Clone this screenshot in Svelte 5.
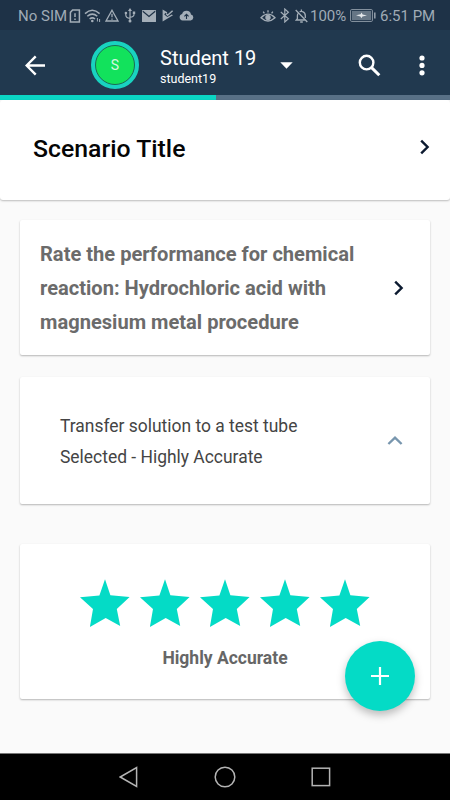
<script lang="ts">
	let progress = $state(48);
	let rating = $state(5);
	let expanded = $state(true);

	const labels = ['', 'Inaccurate', 'Slightly Accurate', 'Fair', 'Accurate', 'Highly Accurate'];
	const stars = [1, 2, 3, 4, 5];
</script>

<div class="screen">
	<div class="status">
		<span class="sim">No SIM</span>
		<svg class="stroke" width="12" height="14" viewBox="0 0 12 14">
			<path d="M3.6 1H10.4V13H1.4V3.4Z M6 4.2V8 M6 9.5V11" stroke-width="1.5" />
		</svg>
		<svg class="stroke wifi" width="18" height="14" viewBox="0 0 18 14">
			<path d="M1 4.6Q8.3-2 15.6 4.6 M3.3 7.3Q8.3 3 13.3 7.3 M5.6 10Q8.3 7.7 11 10" stroke-width="1.5" />
			<circle cx="8.3" cy="12" r="1.3" class="solid" />
			<path d="M13.4 9V12.5 M15.6 10V13" stroke-width="1" />
		</svg>
		<svg class="stroke warn" width="14" height="13" viewBox="0 0 14 13">
			<path d="M7 1.2L13 12H1Z M7 4.8V8.3 M7 9.4V10.7" stroke-width="1.3" />
		</svg>
		<svg class="stroke usb" width="12" height="15" viewBox="0 0 12 15">
			<path d="M6 2V13 M6 10.3Q1.8 10 1.8 7V5.5 M6 9.2Q10 9 10 6.5V5.5" stroke-width="1.2" />
			<path d="M6 0L8 3H4Z M8.8 3.6h2.4v2.4h-2.4Z" class="solid" />
			<circle cx="1.9" cy="5" r="1.3" class="solid" />
			<circle cx="6" cy="13" r="1.5" class="solid" />
		</svg>
		<svg class="mail" width="14" height="12" viewBox="0 0 14 12">
			<rect width="14" height="12" rx=".6" fill="#a4aeb8" />
			<path d="M.8 1.2L7 6.4L13.2 1.2" fill="none" stroke="#1e3247" stroke-width="1.2" />
		</svg>
		<svg class="play" width="12" height="13" viewBox="0 0 12 13">
			<path d="M.6.5L5.2 3.2L4.8 4.8L3.2 4L2.3 5.6L5.3 8L9.8 5.4L11 6.2L.6 12.5Z" fill="#a4aeb8" />
			<path d="M4.3 4.8L5.6 6.2L10.6 1.8" fill="none" stroke="#a4aeb8" stroke-width="1.5" />
		</svg>
		<svg class="cloud" width="15" height="11" viewBox="0 0 15 11">
			<path d="M3.6 10.4a3.2 3.2 0 0 1-.5-6.3A4.6 4.6 0 0 1 12 4.5a3 3 0 0 1-.3 5.9Z" fill="#a4aeb8" />
			<path d="M7.5 9V4.5 M5.4 6.4L7.5 4.3L9.6 6.4" fill="none" stroke="#1e3247" stroke-width="1.1" />
		</svg>

		<svg class="stroke eye" width="16" height="14" viewBox="0 0 16 14">
			<path d="M1 8.7Q8 1.6 15 8.7Q8 15.2 1 8.7Z M8 3.4V1.2 M4.4 4.4L3.2 2.6 M11.6 4.4L12.8 2.6" stroke-width="1.3" />
			<circle cx="8" cy="8.5" r="2.7" class="solid" />
		</svg>
		<svg class="stroke bt" width="10" height="15" viewBox="0 0 10 15">
			<path d="M.8 4L8.4 10.8L4.8 14V1L8.4 4.2L.8 11" stroke-width="1.2" />
		</svg>
		<svg class="stroke bell" width="13" height="14" viewBox="0 0 13 14">
			<path d="M.7 1L12.3 13 M3 4.5Q2.4 5.4 2.4 7V9.6L1.2 11H9.8 M4.6 2.8Q6 2 7.6 2.6Q10.3 3.5 10.3 6.5V9 M5.2 13H7.8 M6.4 2V.6" stroke-width="1.3" />
		</svg>
		<span class="percent">100%</span>
		<svg class="battery" width="26" height="13" viewBox="0 0 26 13">
			<rect x=".6" y=".6" width="21.8" height="11.8" rx="1" fill="none" stroke="#8f9ba7" />
			<rect x="2" y="2" width="19" height="9" fill="#667685" />
			<path d="M6 6.3L10.6 5.2L11.6 3.6L12.6 5.4L17 6.4L12.4 7.4L11.4 9.2L10.4 7.4Z" fill="#e3e7ea" />
			<path d="M24.8 3.5V9.5" stroke="#8f9ba7" stroke-width="1.6" />
		</svg>
		<span class="time">6:51 PM</span>
	</div>

	<header>
		<button class="back" aria-label="Back">
			<svg width="21" height="21" viewBox="0 0 21 21">
				<path d="M20 10.5H2 M10.7 1.3L1.6 10.5L10.7 19.7" />
			</svg>
		</button>
		<div class="avatar"><span>S</span></div>
		<div class="who">
			<span class="name">Student 19</span>
			<span class="user">student19</span>
		</div>
		<svg class="caret" width="13" height="7" viewBox="0 0 13 7"><path d="M.3.2H12.7L6.5 6.8Z" /></svg>
		<button class="search" aria-label="Search">
			<svg width="23" height="23" viewBox="0 0 23 23">
				<circle cx="8.6" cy="8.6" r="6.8" />
				<path d="M13.6 13.6L21.3 21.3" />
			</svg>
		</button>
		<button class="more" aria-label="More">
			<svg width="6" height="21" viewBox="0 0 6 21">
				<circle cx="3" cy="3" r="2.6" /><circle cx="3" cy="10.4" r="2.6" /><circle cx="3" cy="17.8" r="2.6" />
			</svg>
		</button>
	</header>
	<div class="progress"><div class="bar" style:width="{progress}%"></div></div>

	<section class="title-card">
		<h1>Scenario Title</h1>
		<svg class="chev" width="10" height="16" viewBox="0 0 10 16"><path d="M1.2 1.6L7.6 8L1.2 14.4" /></svg>
	</section>

	<main>
		<section class="card question">
			<h2>Rate the performance for chemical reaction: Hydrochloric acid with magnesium metal procedure</h2>
			<svg class="chev" width="10" height="16" viewBox="0 0 10 16"><path d="M1.2 1.6L7.6 8L1.2 14.4" /></svg>
		</section>

		<section class="card step">
			<p>Transfer solution to a test tube<br />Selected - {labels[rating]}</p>
			<button class="toggle" aria-label="Toggle" onclick={() => (expanded = !expanded)}>
				<svg width="16" height="10" viewBox="0 0 16 10"><path d="M1.4 8L8 1.7L14.6 8" /></svg>
			</button>
		</section>

		{#if expanded}
			<section class="card rating">
				<div class="stars">
					{#each stars as n (n)}
						<button class="star" class:off={n > rating} aria-label="{n} stars" onclick={() => (rating = n)}>
							<svg width="60" height="48" viewBox="0 0 60 48">
								<path d="M30 .2L35.4 16.2L54.6 18L41.8 30L45.2 47L30.7 39L14.9 48L18 30L5 18.2L24.4 16.6Z" />
							</svg>
						</button>
					{/each}
				</div>
				<span class="rating-label">{labels[rating]}</span>
			</section>
		{/if}
	</main>

	<button class="fab" aria-label="Add">
		<svg width="18" height="18" viewBox="0 0 18 18"><path d="M9 0V18 M0 9H18" /></svg>
	</button>

	<nav>
		<svg width="20" height="22" viewBox="0 0 20 22"><path d="M17.6 1.5V20.5L1.2 11Z" /></svg>
		<svg width="22" height="22" viewBox="0 0 22 22"><circle cx="11" cy="11" r="9.8" /></svg>
		<svg width="20" height="20" viewBox="0 0 20 20"><rect x="1.2" y="1.2" width="17.4" height="17.4" /></svg>
	</nav>
</div>

<style>
	:global(body) {
		margin: 0;
	}
	.screen {
		position: relative;
		display: flex;
		flex-direction: column;
		width: 450px;
		height: 800px;
		overflow: hidden;
		background: #fafafa;
		font-family: Roboto, sans-serif;
	}
	svg {
		display: block;
		flex: none;
	}
	button {
		padding: 0;
		border: 0;
		background: none;
	}
	.status {
		display: flex;
		align-items: center;
		box-sizing: border-box;
		height: 30px;
		padding: 1px 15px 0 18px;
		background: #1e3247;
		color: #a0abb6;
		font-size: 15px;
		white-space: nowrap;
	}
	.status .stroke {
		fill: none;
		stroke: #a4aeb8;
	}
	.status .solid {
		fill: #a4aeb8;
		stroke: none;
	}
	.sim {
		width: 51px;
	}
	.wifi {
		margin-left: 3px;
	}
	.warn {
		margin-left: 3px;
	}
	.usb {
		margin-left: 5px;
	}
	.mail {
		margin-left: 6px;
	}
	.play {
		margin-left: 6px;
	}
	.cloud {
		margin-left: 5px;
	}
	.eye {
		margin-left: auto;
	}
	.bt {
		margin-left: 4px;
	}
	.bell {
		margin-left: 5px;
	}
	.percent {
		width: 36px;
		margin-left: 2px;
	}
	.battery {
		margin-left: 4px;
	}
	.time {
		width: 55px;
		margin-left: 4px;
	}
	header {
		display: flex;
		align-items: center;
		box-sizing: border-box;
		height: 65px;
		padding-top: 5px;
		background: #21394f;
		color: #fff;
	}
	.back {
		margin-left: 25px;
	}
	.back path,
	.search path,
	.search circle {
		fill: none;
		stroke: #fff;
		stroke-width: 2.4;
	}
	.search path {
		stroke-width: 3;
	}
	.avatar {
		box-sizing: border-box;
		width: 48px;
		height: 48px;
		margin-left: 45px;
		border: 4px solid #19d3c0;
		border-radius: 50%;
		background: #19d3c0;
	}
	.avatar span {
		display: flex;
		align-items: center;
		justify-content: center;
		box-sizing: border-box;
		height: 40px;
		border: 1px solid #1b6b55;
		border-radius: 50%;
		background: #12e25c;
		color: #d5f8e1;
		font-size: 14px;
	}
	.who {
		display: flex;
		flex-direction: column;
		width: 97px;
		margin: 4px 0 0 21px;
		white-space: nowrap;
	}
	.name {
		font-size: 20px;
		line-height: 24px;
	}
	.user {
		font-size: 12.5px;
		line-height: 18px;
	}
	.caret {
		margin-left: 23px;
		fill: #fff;
	}
	.search {
		margin-left: 65px;
	}
	.more {
		margin-left: 38px;
		fill: #fff;
	}
	.progress {
		height: 5px;
		background: #587086;
	}
	.bar {
		height: 100%;
		background: #0bd5c4;
	}
	.title-card {
		display: flex;
		align-items: center;
		justify-content: space-between;
		box-sizing: border-box;
		height: 100px;
		padding: 0 20px 6px 33px;
		border-radius: 3px;
		background: #fff;
		box-shadow: 0 1px 2px rgba(0, 0, 0, 0.25);
	}
	h1 {
		margin: 2px 0 0;
		color: #050505;
		font-size: 24.8px;
		font-weight: 500;
	}
	.chev {
		fill: none;
		stroke: #0c1a30;
		stroke-width: 2.4;
	}
	main {
		flex: 1;
		padding: 20px 20px 0;
	}
	.card {
		display: flex;
		box-sizing: border-box;
		border-radius: 2px;
		background: #fff;
		box-shadow: 0 1px 2px rgba(0, 0, 0, 0.28);
	}
	.question {
		align-items: center;
		justify-content: space-between;
		height: 135px;
		padding: 0 26px 0 20px;
	}
	h2 {
		width: 330px;
		margin: 3px 0 0;
		color: #6b6b6b;
		font-size: 20.1px;
		font-weight: 700;
		line-height: 33.8px;
	}
	.step {
		align-items: center;
		justify-content: space-between;
		height: 127px;
		margin-top: 22px;
		padding: 0 27px 0 40px;
	}
	p {
		margin: 2px 0 0;
		color: #444;
		font-size: 17.45px;
		line-height: 30.4px;
		white-space: nowrap;
	}
	.toggle path {
		fill: none;
		stroke: #7896ae;
		stroke-width: 2.4;
	}
	.rating {
		flex-direction: column;
		align-items: center;
		height: 155px;
		margin-top: 40px;
		padding-top: 35px;
	}
	.stars {
		display: flex;
	}
	.star {
		fill: #04dbc6;
	}
	.star.off {
		fill: #ddd;
	}
	.rating-label {
		margin-top: 20px;
		color: #666;
		font-size: 17.5px;
		font-weight: 700;
		line-height: 22px;
	}
	/* floats over the rating card */
	.fab {
		position: absolute;
		right: 35px;
		bottom: 89px;
		display: flex;
		align-items: center;
		justify-content: center;
		width: 70px;
		height: 70px;
		border-radius: 50%;
		background: #04dbc6;
		box-shadow: 0 4px 8px rgba(0, 0, 0, 0.26);
	}
	.fab path {
		stroke: #fff;
		stroke-width: 2.2;
	}
	nav {
		display: flex;
		align-items: center;
		justify-content: center;
		gap: 75px;
		box-sizing: border-box;
		height: 47px;
		padding-bottom: 1px;
		border-top: 1px solid #777;
		background: #000;
		fill: none;
		stroke: #b4b4b4;
		stroke-width: 1.5;
	}
</style>
